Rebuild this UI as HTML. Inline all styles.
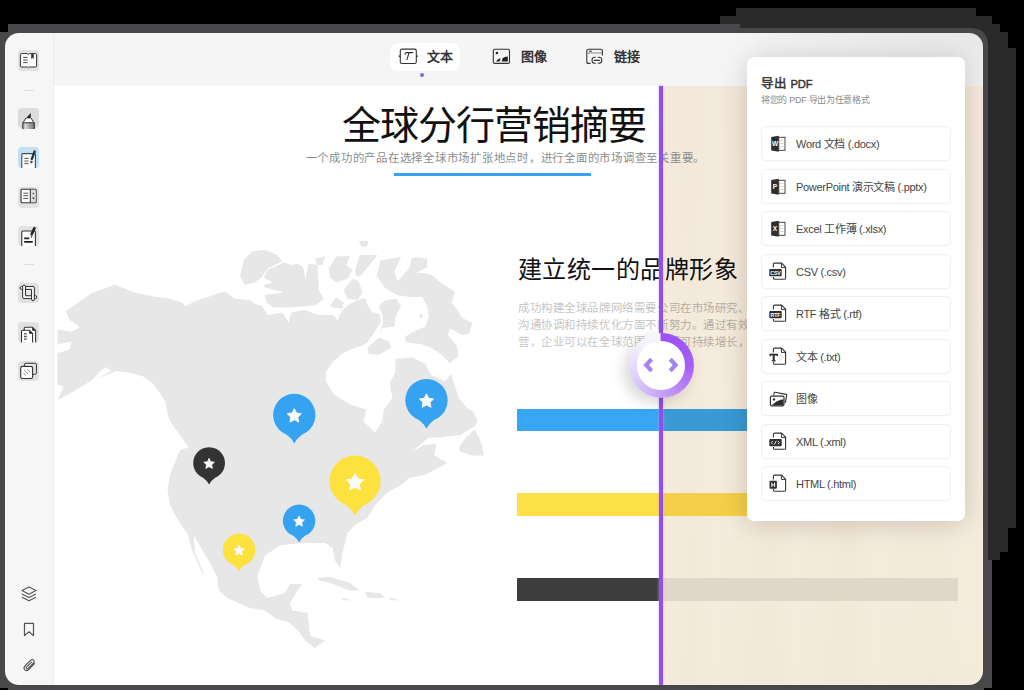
<!DOCTYPE html>
<html lang="zh-CN"><head><meta charset="utf-8">
<style>
*{margin:0;padding:0;box-sizing:border-box}
html,body{width:1024px;height:690px;overflow:hidden;background:#000;font-family:"Liberation Sans",sans-serif}
.abs{position:absolute}
#wrap{position:absolute;left:0;top:0;width:1024px;height:690px;clip-path:inset(33px 41px 5px 5px round 14px)}
.side{left:0;top:0;width:54px;height:690px;background:#f6f6f6;border-right:1px solid #ececec}
.tool{left:54px;top:0;width:970px;height:86px;background:#f5f5f5}
.content{left:54px;top:86px;width:605px;height:604px;background:#fff}
.wood{left:663px;top:86px;width:361px;height:604px;background:linear-gradient(90deg,rgba(120,90,40,0) 0%,rgba(120,90,40,0.015) 8%,rgba(120,90,40,0) 14%,rgba(120,90,40,0.018) 30%,rgba(120,90,40,0) 36%,rgba(120,90,40,0.02) 52%,rgba(120,90,40,0) 58%,rgba(120,90,40,0.012) 75%,rgba(120,90,40,0) 82%),linear-gradient(180deg,#f4eadb,#f5ecdd 50%,#f4ebdb)}
.pline{left:659px;top:86px;width:4px;height:604px;background:#9150e8;box-shadow:0 0 2px 1px rgba(210,160,255,0.35)}
.ic{left:16px}
.tb{font-size:13px;font-weight:bold;color:#333;line-height:14px;white-space:nowrap}
.item{left:761px;width:190px;height:35px;border:1px solid #f0f0f0;border-radius:5px;background:#fff;box-shadow:0 1px 2px rgba(0,0,0,0.025)}
.item span{position:absolute;left:34px;top:10px;font-size:11px;color:#444;line-height:14px;white-space:nowrap;letter-spacing:-0.3px}
.item svg{position:absolute;left:4px;top:5px}
.para{left:518px;font-size:11.4px;letter-spacing:0.58px;color:#c6c6c6;line-height:17.2px;white-space:nowrap}
</style></head><body>
<svg class="abs" style="left:0;top:0" width="1024" height="690">
  <path d="M736 8H976V16H992V24H1000V32H1008V48H1016V528H1008V552H1000V560H720V16H736Z" fill="#2a2a2a"/>
  <path d="M8 24H740V28H970Q988 28 988 46V560H992V690H0V32H8Z" fill="#48484a"/>
  <rect x="0" y="688" width="8" height="2" fill="#000"/><rect x="984" y="688" width="10" height="2" fill="#000"/>
</svg>
<div id="wrap">
  <div class="abs side"></div>
  <div class="abs tool"></div>
  <div class="abs content"></div>
  <div class="abs wood"></div>
  <div class="abs" style="left:640px;top:33px;width:343px;height:53px;background:radial-gradient(ellipse 260px 70px at 100% 0%,rgba(0,0,0,0.055),rgba(0,0,0,0) 100%)"></div>
  <div class="abs" style="left:18px;top:50px;width:20.5px;height:20.5px;border-radius:4px;background:#e2e2e2"></div><svg class="abs ic" style="top:48px" width="24" height="24"><path d="M5.3 5.6H11.2L12.3 6.3L13.4 5.6H19.7Q20.6 5.6 20.6 6.5V18.1Q20.6 19 19.7 19H13.2L12.3 19.8L11.4 19H5.3Q4.4 19 4.4 18.1V6.5Q4.4 5.6 5.3 5.6Z" fill="#fff" stroke="#333" stroke-width="1"/><path d="M7.2 9.4H11.6M7.2 12.1H11.6M7.2 14.6H11.6" stroke="#444" stroke-width="1"/><path d="M15.2 5.8H17.7V10.9L16.45 9.8L15.2 10.9Z" fill="#333"/></svg><div class="abs" style="left:24px;top:89.5px;width:10px;height:1px;background:#dedede"></div><div class="abs" style="left:18px;top:107.5px;width:20.5px;height:20.5px;border-radius:4px;background:#dcdcdc"></div><svg class="abs ic" style="top:106px" width="24" height="24"><defs><linearGradient id="hg" x1="0" x2="1"><stop offset="0" stop-color="#8a8a8a"/><stop offset="0.25" stop-color="#d8d8d8"/><stop offset="0.5" stop-color="#b0b0b0"/><stop offset="1" stop-color="#6e6e6e"/></linearGradient></defs><path d="M9.7 12.4L14.8 7V12.4Z" fill="#262626"/><path d="M9.7 12.4H15.3L17.9 16.6H7Z" fill="#fff"/><path d="M9.9 12.1L7 16.6M15.1 12.1L17.9 16.6" stroke="#333" stroke-width="1"/><rect x="6.4" y="16.4" width="12.3" height="6.6" fill="url(#hg)"/><path d="M6.8 23V16.8H18.3V23" fill="none" stroke="#3a3a3a" stroke-width="1"/></svg><div class="abs" style="left:18px;top:147px;width:20.5px;height:20.5px;border-radius:4px;background:#c2e1f3"></div><svg class="abs ic" style="top:145px" width="24" height="24"><path d="M5.8 23V9.6Q5.8 8.6 6.8 8.6H18.4Q19.4 8.6 19.4 9.6V23" fill="#fff" stroke="#3a4a55" stroke-width="1.1"/><path d="M8.3 13.4H12.5M8.3 16.1H12.5M8.3 18.6H12.5" stroke="#555" stroke-width="1"/><path d="M18.6 6.6L15.8 14.2" stroke="#223340" stroke-width="2.4" stroke-linecap="round"/><path d="M14.6 16.4L15.1 18.1L16.6 16.9Z" fill="#223340" stroke="#223340" stroke-width="0.8"/></svg><div class="abs" style="left:18px;top:187px;width:20.5px;height:20.5px;border-radius:4px;background:#e2e2e2"></div><svg class="abs ic" style="top:185px" width="24" height="24"><rect x="5" y="4.3" width="15.1" height="13.4" rx="1" fill="#fff" stroke="#333" stroke-width="1.1"/><rect x="14.3" y="4.8" width="5.3" height="12.4" fill="#ddd"/><path d="M14.3 4.3V17.7" stroke="#333" stroke-width="1"/><path d="M7.3 8.2H12.3M7.3 10.7H12.3M7.3 13.4H12.3" stroke="#555" stroke-width="1"/><circle cx="17.3" cy="8.5" r="0.8" fill="#333"/><path d="M16.1 12.5H18.7L17.4 14.5Z" fill="#333"/></svg><div class="abs" style="left:18px;top:225.5px;width:20.5px;height:20.5px;border-radius:4px;background:#e2e2e2"></div><svg class="abs ic" style="top:223px" width="24" height="24"><path d="M5.8 23V9Q5.8 8 6.8 8H18.4Q19.4 8 19.4 9V23" fill="#fff" stroke="#333" stroke-width="1.1"/><path d="M18.4 5.2L15.6 11.4" stroke="#222" stroke-width="2.6" stroke-linecap="round"/><path d="M14.6 13.3L15.3 15.1L16.5 13.6Z" fill="#222"/><path d="M8.2 15.4H13.2M8.2 18.9H16.8" stroke="#1e1e1e" stroke-width="1.9"/></svg><div class="abs" style="left:24px;top:263.5px;width:10px;height:1px;background:#dedede"></div><div class="abs" style="left:18px;top:282.5px;width:20.5px;height:20.5px;border-radius:4px;background:#e0e0e0"></div><svg class="abs" style="left:14px;top:278px" width="30" height="30"><rect x="11.5" y="11.4" width="6" height="6.3" fill="#e8e8e8"/><g fill="#f3f3f3" stroke="#333" stroke-width="1"><path d="M7.4 8.5H19Q20.4 8.5 20.4 9.9V21.3Q20.4 22.6 19 22.6Q17.5 22.6 17.5 21.3V11.4H7.4Q6.1 11.4 6.1 10Q6.1 8.5 7.4 8.5Z"/><path d="M8.6 8.4Q8.6 7.1 10 7.1Q11.5 7.1 11.5 8.4V17.7H21.5Q22.8 17.7 22.8 19.1Q22.8 20.6 21.5 20.6H10Q8.6 20.6 8.6 19.2Z"/></g><rect x="17.9" y="17" width="2.1" height="4.2" fill="#f3f3f3"/><path d="M17.5 16.9V21.3M20.4 16.9V21.3" stroke="#333" stroke-width="1"/></svg><div class="abs" style="left:18px;top:321.5px;width:20.5px;height:20.5px;border-radius:4px;background:#e0e0e0"></div><svg class="abs ic" style="top:320px" width="24" height="24"><path d="M8.2 22.6V8.4Q8.2 7.2 9.4 7.2H16.4L19.6 10.5V22.6" fill="#fff" stroke="#333" stroke-width="1.1"/><path d="M16.2 7.3V10.7H19.5Z" fill="#222"/><path d="M5.5 22.6V11.4Q5.5 10.2 6.7 10.2H13.4L16.6 13.5V22.6" fill="#fff" stroke="#333" stroke-width="1.1"/><path d="M13.2 10.3V13.7H16.5Z" fill="#222"/><path d="M8 13.8H10.8M8 16.5H10.8M8 19.2H10.8" stroke="#555" stroke-width="1.3"/></svg><div class="abs" style="left:18px;top:360.5px;width:20.5px;height:20.5px;border-radius:4px;background:#e0e0e0"></div><svg class="abs ic" style="top:358px" width="24" height="24"><rect x="8.4" y="5.3" width="12" height="11" rx="1.6" fill="#e4e4e4" stroke="#333" stroke-width="1"/><rect x="9.2" y="6.1" width="6" height="2" fill="#fff"/><rect x="4.7" y="8.4" width="11.9" height="12.1" rx="1.8" fill="#fff" stroke="#333" stroke-width="1.1"/><path d="M11.5 11.5L13.6 13.6M8.3 12.2L12.5 16.3M7.8 15.3L9.7 17.4" stroke="#333" stroke-width="0.9" stroke-dasharray="1.3 0.7"/></svg><svg class="abs" style="left:20px;top:585px" width="18" height="18"><path d="M9 2L16 5.6L9 9.2L2 5.6Z" fill="none" stroke="#555" stroke-width="1.1" stroke-linejoin="round"/><path d="M2 8.9L9 12.5L16 8.9M2 12.2L9 15.8L16 12.2" fill="none" stroke="#555" stroke-width="1.1" stroke-linejoin="round"/></svg><svg class="abs" style="left:20px;top:620px" width="18" height="18"><path d="M4.5 3.4H13.5V15.6L9 11.8L4.5 15.6Z" fill="none" stroke="#555" stroke-width="1.2" stroke-linejoin="round"/></svg><svg class="abs" style="left:20px;top:656px" width="18" height="18"><path d="M14.6 7.6L8.6 13.6Q6.6 15.6 4.8 13.8Q3 12 5 10L10.8 4.2Q12.2 2.8 13.6 4.2Q15 5.6 13.6 7L8 12.6Q7.2 13.4 6.5 12.7Q5.8 12 6.6 11.2L11.6 6.2" fill="none" stroke="#555" stroke-width="1.1" stroke-linecap="round"/></svg>
  <div class="abs" style="left:390px;top:43px;width:70px;height:28px;border-radius:8px;background:#fff"></div><svg class="abs" style="left:396px;top:44px" width="24" height="24"><rect x="4.3" y="5.1" width="16" height="14.4" rx="1.6" fill="none" stroke="#333" stroke-width="1.1"/><path d="M3 11.4V13M21.6 11.4V13" stroke="#fff" stroke-width="1.6"/><circle cx="3.6" cy="12.2" r="0.9" fill="#333"/><circle cx="21" cy="12.2" r="0.9" fill="#333"/><path d="M9.2 10.2Q8.6 8.6 10.6 8.6H16.8M13 8.7L11 15.6" fill="none" stroke="#333" stroke-width="1.1" stroke-linecap="round"/></svg><div class="abs tb" style="left:427px;top:50px">文本</div><div class="abs" style="left:419.5px;top:73.3px;width:4px;height:4px;border-radius:50%;background:#7b6be8"></div><svg class="abs" style="left:489px;top:44px" width="24" height="24"><rect x="4.3" y="5.2" width="16.2" height="14.2" rx="1.5" fill="none" stroke="#333" stroke-width="1.1"/><circle cx="7.9" cy="9" r="1.2" fill="#222"/><path d="M7 17.6L9 15.2Q10 14.4 11.6 14.4L10.6 17.6Z" fill="#222"/><path d="M12.6 17.6L13.6 14.6Q14.6 12.6 18.8 12.4V17.6Z" fill="#222"/></svg><div class="abs tb" style="left:520.5px;top:50px">图像</div><svg class="abs" style="left:583px;top:44px" width="24" height="24"><path d="M7.5 19.4H5.4Q3.8 19.4 3.8 17.8V6.8Q3.8 5.2 5.4 5.2H17.8Q19.4 5.2 19.4 6.8V11.6" fill="none" stroke="#333" stroke-width="1.1"/><path d="M4 9H19.2" stroke="#888" stroke-width="1.2"/><path d="M6 7.2H9" stroke="#333" stroke-width="1"/><path d="M12.4 13.2H11.6Q9 13.2 9 16.2Q9 19.2 11.6 19.2H12.4M15.2 13.2H16Q18.8 13.2 18.8 16.2Q18.8 19.2 16 19.2H15.2M11.4 16.4H16.4" fill="none" stroke="#333" stroke-width="1.1" stroke-linecap="round"/></svg><div class="abs tb" style="left:613.5px;top:50px">链接</div>
  <svg class="abs" style="left:0;top:0" width="1024" height="690"><g fill="#e7e7e7"><polygon points="81.4,300.4 91.1,293.6 114.6,284.8 122.5,287.7 134.2,292.6 153.8,296.5 169.4,298.5 182,302.4 185,306.25 195,301.25 210,296.25 225,291.25 235,298.75 250,300 255,303.75 262.5,306.25 267.5,315 282.5,312.5 288.75,322.5 291.25,312.5 305,310 317.5,315 332.5,315 337.5,320 342.5,310 350,303.75 358,300 365,298 367.7,305 372,312 380,314 380.9,322.6 374.8,331.4 367.7,341.9 362.5,345.4 351.9,349 341.4,354.2 333,361.7 326,372 325.8,381 334.5,395.1 351.9,405.2 366.4,409.6 363.5,421.2 375.1,432.8 382.3,421.2 383.8,409.6 392.5,398 389.6,383.5 395.4,371.9 395.4,358.8 397.5,358.75 412.5,357.5 425,363.75 431.25,375 445,381.25 451.25,373.75 453.75,382.5 458.75,397.5 466.25,407.5 472.5,411.25 477.5,420 475.6,425.6 460.6,435 440,437.5 428.7,437.5 411,452.5 423.1,445.3 436.2,443.4 434.4,455.6 447.5,463.1 441.9,466 425.9,474.4 409,478.1 402.5,484 387.5,492.5 375,505 367.5,517.5 355,525 347.5,533 342.5,553 340,568 335,560.5 332.5,548 325,543 300,543 280,545.5 265,555.5 257.5,575.5 260,590.5 267.5,598 285,593 290,584 302.5,584 297.5,590.5 290,603 292.5,610.5 307.5,613 310,635.5 325,640.5 315,648 305,640.5 300,633 290,623 275,618 265,610.5 250,608 227.5,598 218.75,590.5 217.5,578 211.25,565.5 193.75,535.5 195,553 202.5,570.5 203.75,576.75 200,568 191.25,548 187.5,533 182.5,527 175,515 170,505 167.5,490 170,475 175,462.5 180,450 188.75,447.5 180,435 172.5,425 168,416 165.5,402.2 159.6,392.4 153.8,384.6 144,376.8 130.3,372.8 116.6,370.9 97,378.7 110.7,370.9 106.8,367 102.9,368.9 91.1,380.7 71.6,392.4 57.5,400.2 63.7,386.5 57.5,384.6 57.5,353.3 69.6,349.4 71.6,341.5 57.5,344.5 57.5,329.8 71.6,331.8 79.4,327.8 77.4,324.9 69.6,320 65.7,311.2"/><polygon points="240,276.25 243.75,260 252.5,251.25 265,250 277.5,255 282.5,261.25 267.5,268.75 261.25,277.5 255,282.5 245,285"/><polygon points="263.75,277.5 267.5,270 283.75,262.5 291.25,265 297.5,263.75 303,267 305.5,279 308.5,264 311.25,263.75 317.5,265 318.75,290 323.75,298.75 316.25,305 305,306.25 286.25,307.5 273.75,307.5 266.25,302.5 265,295 283.75,292.5 265,287.5 263.75,285 272.5,282.5"/><polygon points="328.75,268.75 336.25,256.25 350,256.25 346.25,265 352.5,270 347.5,278.75 336.25,282.5 330,277.5"/><polygon points="355,270 360,255 377.5,255 367.5,267.5 360,276.25 356.25,276.25"/><polygon points="358.75,241 368.75,241 366.25,247.5 361.25,246.25"/><polygon points="343.75,290 352.5,278.75 358.75,281.25 362.5,292.5 357.5,300 347.5,298.75"/><polygon points="330,305 336.25,297.5 343.75,302.5 342.5,308.75 332.5,307.5"/><polygon points="376.7,276.1 380.2,260.4 401.1,257 394.1,270.9 397.6,281.3 409.8,267.4 411.5,258.7 415,257 427.2,258.7 427.2,267.4 416.7,272.6 430.7,274.3 441.1,283 455,291.7 451.5,302.2 456.7,309.1 462,317.8 472.4,323 468.9,333.5 462,335.2 449.8,328.3 448,335.2 456.7,345.7 458.5,356.1 449.8,363 441.1,354.3 430.7,347.4 420.2,343.9 406.3,342.2 404.6,337 413.3,331.7 425.4,326.5 428.9,316.1 427.2,305.7 422,297 409.8,297 397.6,295.2 385.4,288.3"/><polygon points="367.5,347.5 378.75,337.5 388.75,341.25 391.25,347.5 378.75,355 368.75,353.75"/><polygon points="458.7,448.1 466.2,436.9 474.7,429.4 481.2,442.5 484,455.6 471.9,455.6 460.6,451.9"/><polygon points="385.4,300.4 395.9,298.7 401.1,305.7 395.9,316.1 394.1,326.5 382,328.3 379,334 383,323 382,313 378.5,306"/><polygon points="419.5,314 422.5,314 423,317.5 419.5,317.5"/><polygon points="315,258.75 325,256.25 322.5,265 317.5,265"/><polygon points="317.5,578 330,576.75 350,583 360,590.5 350,590.5 330,583 320,580.5"/><polygon points="365,591.75 380,593 385,598 367.5,598"/><polygon points="390,598 397.5,599.25 397,600.5 390,600"/><polygon points="342.5,598 350,599.25 348,600.5 342,600"/></g><path d="M286.67 434.72 A21.20 21.20 0 1 1 301.93 434.72 Q297.27 437.90 294.30 443.41 Q291.33 437.90 286.67 434.72 Z" fill="#35a3f2"/><polygon points="294.30,408.65 296.48,413.06 301.35,413.77 297.82,417.21 298.66,422.06 294.30,419.77 289.94,422.06 290.78,417.21 287.25,413.77 292.12,413.06" fill="#fafafa" stroke="#fafafa" stroke-width="0.97" stroke-linejoin="round"/><path d="M418.87 419.92 A21.20 21.20 0 1 1 434.13 419.92 Q429.47 423.10 426.50 428.61 Q423.53 423.10 418.87 419.92 Z" fill="#35a3f2"/><polygon points="426.50,393.85 428.68,398.26 433.55,398.97 430.02,402.41 430.86,407.26 426.50,404.97 422.14,407.26 422.98,402.41 419.45,398.97 424.32,398.26" fill="#fafafa" stroke="#fafafa" stroke-width="0.97" stroke-linejoin="round"/><path d="M293.27 535.87 A16.20 16.20 0 1 1 304.93 535.87 Q301.37 538.30 299.10 542.51 Q296.83 538.30 293.27 535.87 Z" fill="#35a3f2"/><polygon points="299.10,515.95 300.76,519.32 304.49,519.86 301.79,522.49 302.43,526.19 299.10,524.44 295.77,526.19 296.41,522.49 293.71,519.86 297.44,519.32" fill="#fafafa" stroke="#fafafa" stroke-width="0.74" stroke-linejoin="round"/><path d="M345.82 504.91 A25.50 25.50 0 1 1 364.18 504.91 Q358.57 508.74 355.00 515.37 Q351.43 508.74 345.82 504.91 Z" fill="#fde13d"/><polygon points="355.00,473.56 357.62,478.87 363.48,479.72 359.24,483.85 360.24,489.69 355.00,486.93 349.76,489.69 350.76,483.85 346.52,479.72 352.38,478.87" fill="#fafafa" stroke="#fafafa" stroke-width="1.16" stroke-linejoin="round"/><path d="M233.27 564.87 A16.20 16.20 0 1 1 244.93 564.87 Q241.37 567.30 239.10 571.51 Q236.83 567.30 233.27 564.87 Z" fill="#fde13d"/><polygon points="239.10,544.95 240.76,548.32 244.49,548.86 241.79,551.49 242.43,555.19 239.10,553.44 235.77,555.19 236.41,551.49 233.71,548.86 237.44,548.32" fill="#fafafa" stroke="#fafafa" stroke-width="0.74" stroke-linejoin="round"/><path d="M203.38 477.89 A15.90 15.90 0 1 1 214.82 477.89 Q211.33 480.27 209.10 484.41 Q206.87 480.27 203.38 477.89 Z" fill="#333333"/><polygon points="209.10,458.34 210.73,461.65 214.39,462.18 211.74,464.75 212.37,468.39 209.10,466.67 205.83,468.39 206.46,464.75 203.81,462.18 207.47,461.65" fill="#fafafa" stroke="#fafafa" stroke-width="0.73" stroke-linejoin="round"/></svg>
  <!-- title -->
  <div class="abs" style="left:342px;top:102px;font-size:39px;letter-spacing:-1px;line-height:48px;color:#111;white-space:nowrap">全球分行营销摘要</div>
  <div class="abs" style="left:305.5px;top:150.5px;font-size:11.4px;letter-spacing:0.75px;line-height:15px;color:#8c8c8c;white-space:nowrap">一个成功的产品在选择全球市场扩张地点时，进行全面的市场调查至关重要。</div>
  <div class="abs" style="left:394px;top:173px;width:197px;height:3px;background:#3aa2ea"></div>
  <div class="abs" style="left:517.8px;top:253.5px;font-size:24px;letter-spacing:0.5px;line-height:32px;color:#111;white-space:nowrap">建立统一的品牌形象</div>
  <div class="abs" style="left:510px;top:290px;width:153px;height:70px;overflow:hidden">
    <div class="abs para" style="left:8px;top:10px">成功构建全球品牌网络需要公司在市场研究、</div>
    <div class="abs para" style="left:8px;top:27.2px">沟通协调和持续优化方面不断努力。通过有效</div>
    <div class="abs para" style="left:8px;top:44.4px">营，企业可以在全球范围内实现可持续增长，</div>
  </div>
  <div class="abs" style="left:663px;top:290px;width:100px;height:70px;overflow:hidden">
    <div class="abs para" style="left:-145px;top:10px;color:#b5aea3">成功构建全球品牌网络需要公司在市场研究、</div>
    <div class="abs para" style="left:-145px;top:27.2px;color:#b5aea3">沟通协调和持续优化方面不断努力。通过有效</div>
    <div class="abs para" style="left:-145px;top:44.4px;color:#b5aea3">营，企业可以在全球范围内实现可持续增长，</div>
  </div>
  <!-- bars left -->
  <div class="abs" style="left:517px;top:409px;width:142px;height:22px;background:#36a6f5"></div>
  <div class="abs" style="left:517px;top:493px;width:142px;height:23px;background:#fde045"></div>
  <div class="abs" style="left:517px;top:578px;width:142px;height:23px;background:#3d3d3d"></div>
  <!-- bars right -->
  <div class="abs" style="left:663px;top:409px;width:295px;height:22px;background:#3a9ad6"></div>
  <div class="abs" style="left:663px;top:493px;width:295px;height:23px;background:#f4cf48"></div>
  <div class="abs" style="left:663px;top:578px;width:295px;height:23px;background:#e0d7ca"></div>
  <div class="abs pline"></div>
  <!-- handle -->
  <div class="abs" style="left:628.6px;top:333px;width:65px;height:65px;border-radius:50%;background:conic-gradient(from 0deg,#9a50f4 0%,#a55ff5 25%,#c6a3f7 50%,#e3d7fa 72%,#f4f1fb 88%,#f7f5fc 99%,#9a50f4 100%);box-shadow:-5px 5px 14px rgba(0,0,0,0.16)"></div>
  <div class="abs" style="left:636.9px;top:341.3px;width:48.4px;height:48.4px;border-radius:50%;background:#fff"></div>
  <svg class="abs" style="left:620px;top:325px" width="80" height="80"><path d="M31.6 34.2L26.2 39.9L31.6 45.8M50.2 34.2L55.6 39.9L50.2 45.8" fill="none" stroke="#a584f1" stroke-width="4.2" stroke-linecap="butt" stroke-linejoin="miter"/></svg>
  <!-- export panel -->
  <div class="abs" style="left:747px;top:57px;width:218px;height:464px;background:#fff;border-radius:7px;box-shadow:0 3px 24px rgba(0,0,0,0.12),0 0 44px rgba(60,40,0,0.06)"></div>
  <div class="abs" style="left:761px;top:76.5px;font-size:12.5px;line-height:14px;color:#333;white-space:nowrap;-webkit-text-stroke:0.45px #333">导出 <span style="font-size:11.2px;letter-spacing:-0.1px">PDF</span></div>
  <div class="abs" style="left:761px;top:93.5px;font-size:9px;letter-spacing:-0.3px;line-height:12px;color:#8a8a8a;white-space:nowrap">将您的 PDF 导出为任意格式</div>
  <div class="abs item" style="top:126.40px"><svg width="24" height="24" viewBox="0 0 24 24"><path d="M5.2 4.9L12.8 3.8V19.8L5.2 18.4Z" fill="#2e2e2e"/><rect x="12.8" y="5.3" width="6.2" height="13" fill="#fff" stroke="#333" stroke-width="0.9"/><path d="M14.3 8.5H17.5M14.3 11.5H17.5M14.3 14.5H17.5" stroke="#ccc" stroke-width="0.8"/><text x="9" y="14.3" font-size="6.5" font-weight="bold" fill="#fff" text-anchor="middle" font-family="Liberation Sans">W</text></svg><span>Word 文档 (.docx)</span></div>
<div class="abs item" style="top:168.85px"><svg width="24" height="24" viewBox="0 0 24 24"><path d="M5.2 4.9L12.8 3.8V19.8L5.2 18.4Z" fill="#2e2e2e"/><rect x="12.8" y="5.3" width="6.2" height="13" fill="#fff" stroke="#333" stroke-width="0.9"/><path d="M14.3 8.5H17.5M14.3 11.5H17.5M14.3 14.5H17.5" stroke="#ccc" stroke-width="0.8"/><text x="9" y="14.3" font-size="6.5" font-weight="bold" fill="#fff" text-anchor="middle" font-family="Liberation Sans">P</text></svg><span>PowerPoint 演示文稿 (.pptx)</span></div>
<div class="abs item" style="top:211.30px"><svg width="24" height="24" viewBox="0 0 24 24"><path d="M5.2 4.9L12.8 3.8V19.8L5.2 18.4Z" fill="#2e2e2e"/><rect x="12.8" y="5.3" width="6.2" height="13" fill="#fff" stroke="#333" stroke-width="0.9"/><path d="M14.3 8.5H17.5M14.3 11.5H17.5M14.3 14.5H17.5" stroke="#ccc" stroke-width="0.8"/><text x="9" y="14.3" font-size="6.5" font-weight="bold" fill="#fff" text-anchor="middle" font-family="Liberation Sans">X</text></svg><span>Excel 工作薄 (.xlsx)</span></div>
<div class="abs item" style="top:253.75px"><svg width="24" height="24" viewBox="0 0 24 24"><path d="M7.4 7.6V4.2Q7.4 3.1 8.5 3.1H15.6L19.6 7.2V18.2Q19.6 19.3 18.5 19.3H8.6Q7.5 19.3 7.5 18.2V17" stroke="#333" stroke-width="1.1" fill="#fff"/><path d="M15.4 3.3V7.4H19.4" stroke="#333" stroke-width="1" fill="none"/><rect x="3.3" y="9" width="12.4" height="7.3" rx="1" fill="#2e2e2e"/><text x="9.5" y="14.6" font-size="5.2" font-weight="bold" fill="#fff" text-anchor="middle" font-family="Liberation Sans">CSV</text></svg><span>CSV (.csv)</span></div>
<div class="abs item" style="top:296.20px"><svg width="24" height="24" viewBox="0 0 24 24"><path d="M7.4 7.6V4.2Q7.4 3.1 8.5 3.1H15.6L19.6 7.2V18.2Q19.6 19.3 18.5 19.3H8.6Q7.5 19.3 7.5 18.2V17" stroke="#333" stroke-width="1.1" fill="#fff"/><path d="M15.4 3.3V7.4H19.4" stroke="#333" stroke-width="1" fill="none"/><rect x="3.3" y="9" width="12.4" height="7.3" rx="1" fill="#2e2e2e"/><text x="9.5" y="14.6" font-size="5.2" font-weight="bold" fill="#fff" text-anchor="middle" font-family="Liberation Sans">RTF</text></svg><span>RTF 格式 (.rtf)</span></div>
<div class="abs item" style="top:338.65px"><svg width="24" height="24" viewBox="0 0 24 24"><path d="M7.4 7.6V4.2Q7.4 3.1 8.5 3.1H15.6L19.6 7.2V18.2Q19.6 19.3 18.5 19.3H8.6Q7.5 19.3 7.5 18.2V17" stroke="#333" stroke-width="1.1" fill="#fff"/><path d="M15.4 3.3V7.4H19.4" stroke="#333" stroke-width="1" fill="none"/><rect x="3.5" y="8" width="8.5" height="9" fill="#fff"/><path d="M4 9.6H11.4" stroke="#2a2a2a" stroke-width="1.8"/><path d="M4.1 9V11.2M11.3 9V11.2" stroke="#2a2a2a" stroke-width="1.2"/><path d="M7.7 9.4V15.6" stroke="#2a2a2a" stroke-width="2"/><path d="M5.8 15.8H9.6" stroke="#2a2a2a" stroke-width="1.3"/><path d="M12.5 10.5H16M12.5 12.7H16.5M12.5 15H16" stroke="#ddd" stroke-width="0.8"/></svg><span>文本 (.txt)</span></div>
<div class="abs item" style="top:381.10px"><svg width="24" height="24" viewBox="0 0 24 24"><path d="M7.6 8.6L8.2 5.9Q8.4 5.1 9.2 5.2L20 7.4Q20.8 7.6 20.7 8.4L19.3 15.8" stroke="#333" stroke-width="1.1" fill="none"/><rect x="4.4" y="9.2" width="13.6" height="9.6" rx="1.2" fill="#fff" stroke="#333" stroke-width="1.2"/><circle cx="8" cy="12.4" r="1.2" fill="#333"/><path d="M5.5 18.2L10.5 14.6Q14 12.8 17.5 12.3V18.2Z" fill="#2e2e2e"/></svg><span>图像</span></div>
<div class="abs item" style="top:423.55px"><svg width="24" height="24" viewBox="0 0 24 24"><path d="M7.4 7.6V4.2Q7.4 3.1 8.5 3.1H15.6L19.6 7.2V18.2Q19.6 19.3 18.5 19.3H8.6Q7.5 19.3 7.5 18.2V17" stroke="#333" stroke-width="1.1" fill="#fff"/><path d="M15.4 3.3V7.4H19.4" stroke="#333" stroke-width="1" fill="none"/><rect x="3.3" y="9" width="12.4" height="7.3" rx="1" fill="#2e2e2e"/><path d="M6.8 11L5.2 12.65L6.8 14.3M11.8 11L13.4 12.65L11.8 14.3M10.3 10.8L8.3 14.5" stroke="#fff" stroke-width="0.9" fill="none"/></svg><span>XML (.xml)</span></div>
<div class="abs item" style="top:466.00px"><svg width="24" height="24" viewBox="0 0 24 24"><path d="M7.4 7.6V4.2Q7.4 3.1 8.5 3.1H15.6L19.6 7.2V18.2Q19.6 19.3 18.5 19.3H8.6Q7.5 19.3 7.5 18.2V17" stroke="#333" stroke-width="1.1" fill="#fff"/><path d="M15.4 3.3V7.4H19.4" stroke="#333" stroke-width="1" fill="none"/><rect x="3.5" y="8.8" width="7.4" height="8" rx="1" fill="#2e2e2e"/><path d="M5.8 10.6V15M8.6 10.6V15M5.8 12.8H8.6" stroke="#fff" stroke-width="1" fill="none"/></svg><span>HTML (.html)</span></div>

</div>
</body></html>
